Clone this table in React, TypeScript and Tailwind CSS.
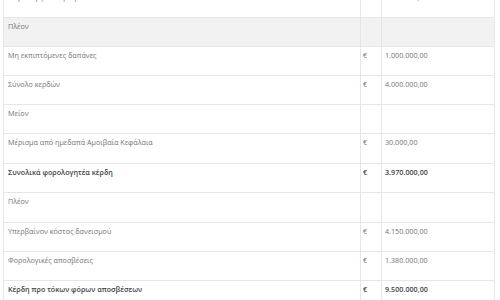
type Row = {
  label: string;
  value?: string;
  bold?: boolean;
  shaded?: boolean;
  h: string;
};

const rows: Row[] = [
  { label: "Φορολογητέα κέρδη", value: "5.000.000,00", h: "h-[29px]" },
  { label: "Πλέον", shaded: true, h: "h-[29px]" },
  { label: "Μη εκπιπτόμενες δαπάνες", value: "1.000.000,00", h: "h-[29px]" },
  { label: "Σύνολο κερδών", value: "4.000.000,00", h: "h-[29px]" },
  { label: "Μείον", h: "h-[29px]" },
  { label: "Μέρισμα από ημεδαπά Αμοιβαία Κεφάλαια", value: "30.000,00", h: "h-[30px]" },
  { label: "Συνολικά φορολογητέα κέρδη", value: "3.970.000,00", bold: true, h: "h-[29px]" },
  { label: "Πλέον", h: "h-[30px]" },
  { label: "Υπερβαίνον κόστος δανεισμού", value: "4.150.000,00", h: "h-[29px]" },
  { label: "Φορολογικές αποσβέσεις", value: "1.380.000,00", h: "h-[29px]" },
  { label: "Κέρδη προ τόκων φόρων αποσβέσεων", value: "9.500.000,00", bold: true, h: "h-[29px]" },
];

export default function App() {
  return (
    <div className="w-[500px] h-[300px] overflow-hidden bg-white font-['Open_Sans',sans-serif]">
      <div className="ml-[3px] w-[492px] -mt-[11px] border-l border-r border-[#e6e6e6]">
        {rows.map((r, i) => (
          <div
            key={i}
            className={`flex border-b border-[#e6e6e6] text-[7.2px] leading-[12px] ${r.h} ${
              r.shaded ? "bg-[#f2f2f2]" : "bg-white"
            } ${r.bold ? "font-semibold text-[#454545]" : "text-[#747474]"}`}
          >
            <div className="w-[356px] pl-[4px] pt-[2px]">{r.label}</div>
            <div className="w-[21px] border-l border-[#e6e6e6] pl-[2px] pt-[2px]">
              {r.value ? "€" : ""}
            </div>
            <div className="flex-1 border-l border-[#e6e6e6] pl-[3px] pt-[2px]">
              {r.value ?? ""}
            </div>
          </div>
        ))}
      </div>
    </div>
  );
}
